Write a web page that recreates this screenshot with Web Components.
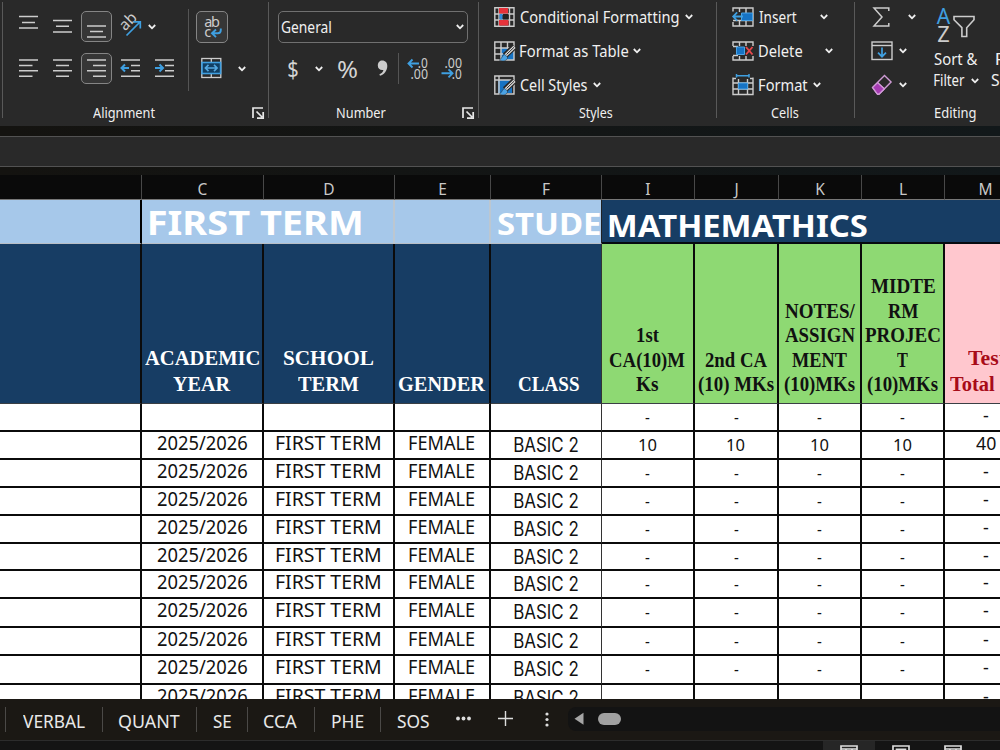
<!DOCTYPE html>
<html lang="en">
<head>
<meta charset="utf-8">
<title>Score sheet</title>
<style>
  body {
    margin: 0;
    width: 1000px;
    height: 750px;
    overflow: hidden;
    background: #141414;
    font-family: "Noto Sans", "Open Sans", sans-serif;
  }
</style>
</head>
<body>
<score-app></score-app>

<script>
// name: [width, height, markup]
const ICONS = {
  chevron: [8, 6, '<path d="M.8 1 4 4.3 7.2 1" stroke="#eee" stroke-width="1.8"/>'],
  top: [20, 31, '<path d="M0 5.5h19M3 11.5h13M0 17h19"/>'],
  middle: [20, 31, '<path d="M0 9.5h19M3 15.3h13M0 21h19"/>'],
  bottom: [20, 31, '<path d="M0 15h19M3 20.5h13M0 26h19"/>'],
  left: [20, 31, '<path d="M0 7h19M0 12.4h13.5M0 17.8h19M0 23.2h13.5"/>'],
  center: [20, 31, '<path d="M0 7h19M3 12.4h13M0 17.8h19M3 23.2h13"/>'],
  right: [20, 31, '<path d="M0 7h19M6 12.4h13M0 17.8h19M6 23.2h13"/>'],
  outdent: [20, 31, '<path d="M1 7h19M11 12.4h9M11 17.8h9M1 23.2h19"/><path d="M9 15H2M5 11.5 1.5 15 5 18.5" stroke="#3f9fe0" stroke-width="2"/>'],
  indent: [20, 31, '<path d="M0 7h19M10 12.4h9M10 17.8h9M0 23.2h19"/><path d="M0 15h7M4.500 11.5 8 15l-3.500 3.500" stroke="#3f9fe0" stroke-width="2"/>'],
  orient: [24, 31, '<text x="0" y="0" transform="translate(6 20.500) rotate(-45)" font-size="15.500" fill="#ccc">ab</text><path d="M7.500 24.500 21 11M14.500 10.800H21.300V17.500" stroke="#3f9fe0" stroke-width="1.700"/>'],
  wrap: [32, 32, '<text x="8.300" y="16" font-size="14.500" textLength="15.500" fill="#ccc">ab</text><text x="8.300" y="25.500" font-size="14.500" fill="#ccc">c</text><path d="M24.800 17.500v1.500q0 3.300-3 3.300h-5.500M20 18.500l-4 3.800 4 3.800" stroke="#3f9fe0" stroke-width="1.900"/>'],
  merge: [21, 31, '<rect x=".8" y="5.500" width="19" height="19" stroke="#ccc" stroke-width="1.300"/><path d="M10.300 5v4M10.300 21v4" stroke-width="1.300"/><rect x="1" y="9.500" width="18.600" height="11" fill="#123f63" stroke="#3f9fe0" stroke-width="1.600"/><path d="M4.500 15h11.500M7.500 11.900 4.400 15l3.100 3.100M13 11.900l3.100 3.100-3.100 3.100" stroke="#54a9e2" stroke-width="1.600"/>'],
  decMore: [22, 31, '<text x="10.800" y="14.500" font-size="14" textLength="10" lengthAdjust="spacingAndGlyphs" fill="#ccc">.0</text><text x="3.500" y="25.500" font-size="14" textLength="17.500" lengthAdjust="spacingAndGlyphs" fill="#ccc">.00</text><path d="M12 10.500H1.500M5.500 6.500l-4 4 4 4" stroke="#3f9fe0" stroke-width="1.900"/>'],
  decLess: [22, 31, '<text x="3.500" y="14.500" font-size="14" textLength="17.500" lengthAdjust="spacingAndGlyphs" fill="#ccc">.00</text><text x="10.800" y="25.500" font-size="14" textLength="10" lengthAdjust="spacingAndGlyphs" fill="#ccc">.0</text><path d="M.5 20.300h10.500M7.500 16.300l4 4-4 4" stroke="#3f9fe0" stroke-width="1.900"/>'],
  comma: [12, 31, '<path d="M5.200 7.500c3.300 0 5.100 2.300 5.100 5.500 0 4.600-3.200 8.600-7.300 9.800l-.6-1.600c2.400-1 3.700-2.600 4-4.300-3.100.6-5.600-1.300-5.600-4.500 0-2.800 1.900-4.900 4.400-4.900Z" fill="#ccc" stroke="none"/>'],
  launcher: [12, 12, '<path d="M1 11V1h10M4.500 4.500l5.500 5.500M11.200 5v6.200H5" stroke="#e8e8e8" stroke-width="1.700"/>'],
  conditional: [21, 20, '<path d="M.8.8h19.200v18.400H.8zM1 7h19M1 13h19M5 1v18M15.500 1v18" stroke-width="1.400"/><path d="M5 1h9v5.500H5zM5 13h9.500v5.500H5z" fill="#e5323a" stroke="none"/><path d="M5.500 7h3v5.500h-3z" fill="#2d8bdc" stroke="none"/><path d="M9 7h5.500v5.500H9z" fill="#222" stroke="none"/>'],
  table: [22, 21, '<path d="M7 7h13v12H7z" fill="#1673c4" stroke="none"/><path d="M.8 1h19.200v18H.8zM1 7h19M1 13h8M7 1v18M13.500 1v7" stroke-width="1.400"/><path d="M20.500 5.500 11 14.500" stroke="#292929" stroke-width="6"/><path d="M20.500 5.800 11.500 14.500" stroke="#ddd" stroke-width="3"/><path d="m20 6.300-7.500 7.200" stroke="#292929" stroke-width="1"/><path d="M10.800 13.500c-2.800.2-2.200 4-5.500 5.600 4 2 8.200.6 8.300-3Z" fill="#4ba3e5" stroke="#292929" stroke-width=".5"/>'],
  style: [22, 21, '<path d="M4 5h14v13H4z" fill="#1673c4" stroke="none"/><path d="M.8 1h19.200v18H.8zM1 5h19M5 1v18" stroke-width="1.400"/><path d="M20.500 5.500 11 14.500" stroke="#292929" stroke-width="6"/><path d="M20.500 5.800 11.500 14.500" stroke="#ddd" stroke-width="3"/><path d="m20 6.300-7.500 7.200" stroke="#292929" stroke-width="1"/><path d="M10.800 13.500c-2.800.2-2.200 4-5.500 5.600 4 2 8.200.6 8.300-3Z" fill="#4ba3e5" stroke="#292929" stroke-width=".5"/>'],
  insert: [22, 20, '<path d="M1 4.500V1h20v18H1v-4M1 13.500h20M7.500 1v4M14 1v18M7.500 14v5" stroke-width="1.400"/><path d="M9.500 6h11v7.500h-11z" fill="#1673c4" stroke="#4ba3e5" stroke-width="1"/><path d="M11 9.500H1.500M5.200 5.300 1.200 9.500l4 4.200" stroke="#3f9fe0" stroke-width="1.800"/>'],
  delete: [22, 20, '<path d="M1 5V1h20v4M1 15v4h20v-4M7.500 1v4M14 1v4M7.500 15v4M14 15v4M1 5.500h5M1 14.500h5" stroke-width="1.400"/><path d="M4.500 6h8v7.500h-8z" fill="#1673c4" stroke="#4ba3e5" stroke-width="1"/><path d="m14 6 6.500 7.500M20.500 6 14 13.500" stroke="#e8484c" stroke-width="1.900"/>'],
  format: [22, 22, '<path d="M1 3.500v17h20v-17M1 9h20M1 15h20M6.500 5v15M15.500 5v15M1 4.500h3M18 4.500h3" stroke-width="1.400"/><path d="M6.500 9h9v6h-9z" fill="#1673c4" stroke="#4ba3e5" stroke-width="1"/><path d="M4.500 1.800h12.500M4.500 0v3.600M17 0v3.600" stroke="#3f9fe0" stroke-width="1.500"/>'],
  sum: [17, 20, '<path d="M15.800 4V1H1l8 9-8 9h14.800v-3" stroke-width="1.500"/>'],
  fill: [22, 20, '<rect x="1" y="1" width="20" height="17.500" stroke-width="1.400"/><path d="M1 4.500h20" stroke-width="1.400"/><path d="M11 6.500v9M7 11.700l4 4 4-4" stroke="#3f9fe0" stroke-width="1.700"/>'],
  clear: [22, 22, '<path d="m1.500 13.500 5-5 7.300 6.500-5.300 5H6z" fill="#a63bb3" stroke="#c77ad0" stroke-width="1"/><path d="m1.500 13.500 12-12 6.600 6.500L8 20.300H6.500zM6.500 8.500l7 6.500" stroke="#cf9bd5" stroke-width="1.400"/>'],
  sort: [40, 37, '<text x="-.3" y="16.800" font-size="22" textLength="13.500" lengthAdjust="spacingAndGlyphs" fill="#3f9fe0">A</text><text x=".2" y="35" font-size="21.500" textLength="12.500" lengthAdjust="spacingAndGlyphs" fill="#ccc">Z</text><path d="M17 9.500h20v3.200l-7.300 8v8.800h-4.800v-8.800l-7.900-8z" stroke-width="1.600"/>'],
  dots: [15, 5, '<g fill="#ddd" stroke="none"><circle cx="2" cy="2.500" r="1.900"/><circle cx="7.500" cy="2.500" r="1.900"/><circle cx="13" cy="2.500" r="1.900"/></g>'],
  plus: [15, 15, '<path d="M7.500 0v15M0 7.500h15" stroke="#ddd" stroke-width="1.400"/>'],
  more: [4, 15, '<g fill="#ddd" stroke="none"><circle cx="2" cy="2" r="1.600"/><circle cx="2" cy="7.500" r="1.600"/><circle cx="2" cy="13" r="1.600"/></g>'],
  back: [10, 14, '<path d="M9.500.8v12L.5 6.800z" fill="#a5a5a5" stroke="none"/>'],
  grid: [18, 9, '<path d="M1 9V1h16v8M1 4h16M6 4v5M12 4v5" stroke="#ddd" stroke-width="1.700"/>'],
  page: [18, 9, '<path d="M1 9V1h16v8M4.500 9V4.300h9V9" stroke="#ddd" stroke-width="1.700"/>']
};

class XIcon extends HTMLElement {
  constructor() {
    super();
    this.attachShadow({ mode: 'open' });
  }

  connectedCallback() {
    const [w, h, markup] = ICONS[this.getAttribute('name')];
    this.shadowRoot.innerHTML = `
      <style>
        :host { display: block; flex: none; width: ${w}px; height: ${h}px; }
        svg { display: block; overflow: visible; font-family: "Noto Sans", sans-serif; }
      </style>
      <svg width="${w}" height="${h}" fill="none" stroke="#ccc" stroke-width="1.5">${markup}</svg>
    `;
    this.shadowRoot.querySelectorAll('text').forEach(t => t.setAttribute('stroke', 'none'));
  }
}

// One line of text, stretched so that its ink is exactly `w` pixels wide
class FitText extends HTMLElement {
  constructor() {
    super();
    this.attachShadow({ mode: 'open' });
    this.shadowRoot.innerHTML = `
      <style>
        :host { display: block; flex: none; white-space: nowrap; }
        span { display: inline-block; transform-origin: 0 50%; }
      </style>
      <span><slot></slot></span>
    `;
  }

  connectedCallback() {
    const w = Number(this.getAttribute('w'));
    const css = getComputedStyle(this);
    const ctx = document.createElement('canvas').getContext('2d');
    ctx.font = `${css.fontWeight} ${css.fontSize} ${css.fontFamily}`;
    const m = ctx.measureText(this.textContent);
    const scale = w / (m.actualBoundingBoxLeft + m.actualBoundingBoxRight);
    const shift = m.actualBoundingBoxLeft * scale;
    this.style.width = w + 'px';
    this.shadowRoot.querySelector('span').style.transform =
      `translateX(${shift.toFixed(2)}px) scaleX(${scale.toFixed(4)})`;
  }
}

class RibbonGroup extends HTMLElement {
  constructor() {
    super();
    this.attachShadow({ mode: 'open' });
  }

  connectedCallback() {
    const launcher = this.hasAttribute('launcher') ? '<x-icon name="launcher"></x-icon>' : '';
    this.shadowRoot.innerHTML = `
      <style>
        :host {
          display: block;
          flex: none;
          box-sizing: border-box;
          height: 118px;
          background: linear-gradient(#595959, #595959) right 2px / 1px 116px no-repeat;
        }
        .body { height: 102px; }
        footer {
          display: flex;
          height: 22px;
          font-size: 14px;
          line-height: 22px;
          padding-left: ${this.getAttribute('label-left')}px;
        }
        x-icon { margin: 5px 5px 0 auto; }
      </style>
      <div class="body"><slot></slot></div>
      <footer><fit-text w="${this.getAttribute('label-width')}">${this.getAttribute('label')}</fit-text>${launcher}</footer>
    `;
  }
}

class ExcelRibbon extends HTMLElement {
  constructor() {
    super();
    this.attachShadow({ mode: 'open' });
    this.shadowRoot.innerHTML = `
      <style>
        :host {
          display: flex;
          height: 126px;
          box-sizing: border-box;
          padding-left: 3px;
          overflow: hidden;
          color: #f0f0f0;
          font-size: 15.5px;
          background: linear-gradient(#595959, #595959) 2px 2px / 1px 116px no-repeat #292929;
        }
        .cols, .row, .line { display: flex; }
        .rows { display: flex; flex-direction: column; gap: 11px; padding-top: 11px; }
        .row { height: 31px; align-items: center; }
        .line { height: 34px; align-items: center; }
        .on {
          width: 29px;
          height: 29px;
          border: 1px solid #858585;
          border-radius: 5px;
          background: #363636;
          flex: none;
        }
        .on x-icon { margin: -1px 0 0 5px; }
        .on.wide { width: 30px; height: 30px; }
        .on.wide x-icon { margin: -1px; }
        .sep { width: 1px; background: #555; flex: none; }
        .select {
          box-sizing: border-box;
          width: 190px;
          height: 32px;
          border: 1px solid #707070;
          border-radius: 5px;
          display: flex;
          align-items: center;
          justify-content: space-between;
          padding: 0 3px 0 2px;
        }
        .symbol { color: #d4d4d4; font-size: 24px; line-height: 30px; font-weight: 400; }
        .edit { width: 63px; }
        .big { padding-top: 7px; line-height: 21px; }
        .big .row { height: 21px; }
      </style>

      <ribbon-group label="Alignment" label-left="90" label-width="62" launcher style="width: 266px">
        <div class="cols">
          <div class="rows" style="width: 185px">
            <div class="row">
              <x-icon name="top" style="margin-left: 16px"></x-icon>
              <x-icon name="middle" style="margin-left: 14px"></x-icon>
              <div class="on" style="margin-left: 8px"><x-icon name="bottom"></x-icon></div>
              <x-icon name="orient" style="margin-left: 7px"></x-icon>
              <x-icon name="chevron" style="margin-left: 5px"></x-icon>
            </div>
            <div class="row">
              <x-icon name="left" style="margin-left: 16px"></x-icon>
              <x-icon name="center" style="margin-left: 14px"></x-icon>
              <div class="on" style="margin-left: 8px"><x-icon name="right"></x-icon></div>
              <x-icon name="outdent" style="margin-left: 8px"></x-icon>
              <x-icon name="indent" style="margin-left: 15px"></x-icon>
            </div>
          </div>
          <div class="sep" style="margin-top: 9px; height: 82px"></div>
          <div class="rows">
            <div class="row"><div class="on wide" style="margin-left: 7px"><x-icon name="wrap"></x-icon></div></div>
            <div class="row">
              <x-icon name="merge" style="margin-left: 12px"></x-icon>
              <x-icon name="chevron" style="margin-left: 16px"></x-icon>
            </div>
          </div>
        </div>
      </ribbon-group>

      <ribbon-group label="Number" label-left="68" label-width="49" launcher style="width: 210px">
        <div class="rows" style="padding-left: 9px">
          <div class="row"><div class="select"><fit-text w="50">General</fit-text><x-icon name="chevron"></x-icon></div></div>
          <div class="row">
            <fit-text w="10" class="symbol" style="margin-left: 10px">$</fit-text>
            <x-icon name="chevron" style="margin-left: 17px"></x-icon>
            <fit-text w="19" class="symbol" style="margin-left: 15px">%</fit-text>
            <x-icon name="comma" style="margin-left: 20px"></x-icon>
            <div class="sep" style="margin-left: 9px; height: 31px"></div>
            <x-icon name="decMore" style="margin-left: 8px"></x-icon>
            <x-icon name="decLess" style="margin-left: 12px"></x-icon>
          </div>
        </div>
      </ribbon-group>

      <ribbon-group label="Styles" label-left="100" label-width="34" style="width: 238px">
        <div style="padding-left: 15px">
          <div class="line"><x-icon name="conditional"></x-icon><fit-text w="159" style="margin-left: 5px">Conditional Formatting</fit-text><x-icon name="chevron" style="margin-left: 6px"></x-icon></div>
          <div class="line"><x-icon name="table"></x-icon><fit-text w="108" style="margin-left: 4px">Format as Table</fit-text><x-icon name="chevron" style="margin-left: 5px"></x-icon></div>
          <div class="line"><x-icon name="style"></x-icon><fit-text w="67" style="margin-left: 4px">Cell Styles</fit-text><x-icon name="chevron" style="margin-left: 6px"></x-icon></div>
        </div>
      </ribbon-group>

      <ribbon-group label="Cells" label-left="54" label-width="28" style="width: 138px">
        <div style="padding-left: 15px">
          <div class="line"><x-icon name="insert"></x-icon><fit-text w="38" style="margin-left: 5px">Insert</fit-text><x-icon name="chevron" style="margin-left: 23px"></x-icon></div>
          <div class="line"><x-icon name="delete"></x-icon><fit-text w="43" style="margin-left: 5px">Delete</fit-text><x-icon name="chevron" style="margin-left: 23px"></x-icon></div>
          <div class="line"><x-icon name="format"></x-icon><fit-text w="49" style="margin-left: 5px">Format</fit-text><x-icon name="chevron" style="margin-left: 5px"></x-icon></div>
        </div>
      </ribbon-group>

      <ribbon-group label="Editing" label-left="80" label-width="41" style="width: 240px">
        <div class="cols">
          <div style="padding-left: 16px" class="edit">
            <div class="line"><x-icon name="sum" style="margin-left: 2px"></x-icon><x-icon name="chevron" style="margin-left: 18px"></x-icon></div>
            <div class="line"><x-icon name="fill"></x-icon><x-icon name="chevron" style="margin-left: 6px"></x-icon></div>
            <div class="line"><x-icon name="clear"></x-icon><x-icon name="chevron" style="margin-left: 6px"></x-icon></div>
          </div>
          <div class="big" style="margin-left: 4px; width: 53px">
            <x-icon name="sort" style="margin: 0 0 5px -1px"></x-icon>
            <div class="row"><fit-text w="44" style="margin-left: -4px">Sort &amp;</fit-text></div>
            <div class="row"><fit-text w="31" style="margin-left: -4px">Filter</fit-text><x-icon name="chevron" style="margin-left: 6px"></x-icon></div>
          </div>
          <div class="big" style="padding-top: 49px">
            <div class="row"><fit-text w="34" style="margin-left: 5px">Find</fit-text></div>
            <div class="row"><fit-text w="44">Select</fit-text></div>
          </div>
        </div>
      </ribbon-group>
    `;
  }
}

class FormulaBar extends HTMLElement {
  constructor() {
    super();
    this.attachShadow({ mode: 'open' });
    this.shadowRoot.innerHTML = `
      <style>
        :host {
          display: block;
          height: 49px;
          box-sizing: border-box;
          padding: 10px 0 8px;
          background: linear-gradient(90deg, #141310, #12181a);
        }
        div { height: 29px; border: solid #525252; border-width: 1px 0; background: #292929; }
      </style>
      <div></div>
    `;
  }
}

const HEADINGS = [
  null,
  [['ACADEMIC', 114.5], ['YEAR', 58]],
  [['SCHOOL', 89], ['TERM', 60.5]],
  [['GENDER', 87]],
  [['CLASS', 60]],
  [['1st', 22], ['CA(10)M', 74.5], ['Ks', 22.5]],
  [['2nd CA', 62], ['(10) MKs', 76]],
  [['NOTES/', 70], ['ASSIGN', 70], ['MENT', 55], ['(10)MKs', 71]],
  [['MIDTE', 64], ['RM', 30], ['PROJEC', 75], ['T', 11], ['(10)MKs', 71]],
  [['Test', 38], ['Total', 45]]
];
const ROW_HEIGHTS = [28, 28, 28, 28, 28, 27, 28, 29, 28, 29, 28];

class ScoreGrid extends HTMLElement {
  constructor() {
    super();
    this.attachShadow({ mode: 'open' });
    this.shadowRoot.innerHTML = `
      <style>
        :host { display: block; height: 524px; overflow: hidden; background: #fff; }
        .row {
          display: grid;
          grid-template-columns: 142px 122px 131px 96px 111px 93px 84px 83px 83px 82px;
        }
        .row > div {
          box-sizing: border-box;
          border-right: 2px solid #0b0b0b;
          border-bottom: 2px solid #0b0b0b;
          display: flex;
          justify-content: center;
          overflow: hidden;
        }
        .letters { height: 25px; line-height: 28px; color: #c8c8c8; font-size: 15.5px; }
        .letters > div { background: #0a0a0a; border-right: 1px solid #484848; border-bottom: 1px solid #777; }
        .titles {
          height: 44px;
          grid-template-columns: 142px 253px 96px 111px 480px;
          color: #fff;
          font-weight: 700;
        }
        .titles > div {
          background: #a6c8ea;
          border-right-color: #bcc7d1;
          border-bottom: 1px solid #b9bfc6;
          justify-content: flex-start;
        }
        .titles > :first-child { border-right-color: #000; }
        .titles > :nth-child(4) { border-right: 1px solid #222; }
        .titles > :last-child { background: #173d64; border-bottom: 2px solid #060b10; }
        .heads {
          height: 160px;
          font: 700 20.7px/26px "Liberation Serif", serif;
          color: #fff;
        }
        .heads > div {
          flex-direction: column;
          align-items: center;
          justify-content: flex-end;
          background: #173d64;
          border-bottom: 1px solid #3a3f44;
          padding-bottom: 6px;
        }
        .heads > .green { background: #8ed973; color: #111; line-height: 24.4px; padding-bottom: 6.5px; }
        .heads > .pink { background: #ffc7ce; color: #a80b18; }
        .heads > :nth-child(5), .data > :nth-child(5) { border-right: 1px solid #333; }
        .data { color: #111; font-size: 19px; line-height: 23px; }
        .class { font: 19.4px/26px Inter, Roboto, sans-serif; }
        .mark { font-size: 16.5px; line-height: 26px; }
        .total { font-size: 18px; line-height: 22px; margin-left: 2px; }
      </style>
      <div class="row letters"></div>
      <div class="row titles">
        <div></div>
        <div><fit-text w="211" style="font-size: 34.5px; line-height: 44px; margin-left: 8px">FIRST TERM</fit-text></div>
        <div></div>
        <div><fit-text w="102" style="font-size: 31px; line-height: 47px; margin-left: 7px">STUDE</fit-text></div>
        <div><fit-text w="258" style="font-size: 30.5px; line-height: 50px; margin-left: 7px">MATHEMATHICS</fit-text></div>
      </div>
      <div class="row heads"></div>
    `;
    this._renderHeader();
    this._renderRows();
  }

  _renderHeader() {
    const letters = ['', 'C', 'D', 'E', 'F', 'I', 'J', 'K', 'L', 'M'];
    this.shadowRoot.querySelector('.letters').innerHTML =
      letters.map(letter => `<div>${letter}</div>`).join('');
    this.shadowRoot.querySelector('.heads').innerHTML = HEADINGS.map((lines, i) => {
      const type = i === 9 ? 'pink' : i > 4 ? 'green' : '';
      const text = (lines || []).map(([t, w]) => `<fit-text w="${w}">${t}</fit-text>`).join('');
      const nudge = i === 4 ? ' style="padding-left: 5px"' : i === 9 ? ' style="align-items: flex-start; padding-left: 5px"' : '';
      return `<div class="${type}"${nudge}>${text}</div>`;
    }).join('');
    this.shadowRoot.querySelector('.pink fit-text').style.marginLeft = '18px';
  }

  _renderRows() {
    ROW_HEIGHTS.forEach((height, i) => {
      const row = document.createElement('div');
      row.className = 'row data';
      row.style.height = height + 'px';
      const pupil = i > 0
        ? `<div><fit-text w="90">2025/2026</fit-text></div>
           <div><fit-text w="104.500">FIRST TERM</fit-text></div>
           <div><fit-text w="65.500">FEMALE</fit-text></div>
           <div><fit-text class="class" w="64">BASIC 2</fit-text></div>`
        : '<div></div><div></div><div></div><div></div>';
      const mark = i === 1 ? '<fit-text class="mark" w="17.500">10</fit-text>' : '<fit-text class="mark" w="4.500">-</fit-text>';
      const total = i === 1 ? '<fit-text class="total" w="20">40</fit-text>' : '<fit-text class="total" w="6">-</fit-text>';
      // the last row is cut by the tab bar above the line of its marks
      const marks = i < ROW_HEIGHTS.length - 1 ? `<div>${mark}</div>`.repeat(4) : '<div></div>'.repeat(4);
      row.innerHTML = '<div></div>' + pupil + marks + `<div>${total}</div>`;
      this.shadowRoot.appendChild(row);
    });
  }
}

class SheetTabs extends HTMLElement {
  constructor() {
    super();
    this.attachShadow({ mode: 'open' });
    this.shadowRoot.innerHTML = `
      <style>
        :host {
          display: flex;
          align-items: center;
          box-sizing: border-box;
          height: 42px;
          padding: 0 0 1px 5px;
          background: #1b1814;
          border-bottom: 1px solid #2c2c2c;
          color: #e8e8e8;
          font-size: 17.5px;
          line-height: 40px;
        }
        .tab {
          display: flex;
          justify-content: center;
          box-sizing: border-box;
          height: 25px;
          line-height: 28px;
          border-left: 1px solid #4b4947;
        }
        .scroll {
          display: flex;
          align-items: center;
          flex: 1;
          height: 24px;
          margin: 0 0 0 19px;
          padding-left: 6px;
          border-radius: 8px 0 0 8px;
          background: #131313;
        }
        .thumb { width: 23px; height: 12px; margin-left: 14px; border-radius: 6px; background: #a0a0a0; }
      </style>
      <div class="tab" style="width: 97px"><fit-text w="62">VERBAL</fit-text></div>
      <div class="tab" style="width: 94px"><fit-text w="61">QUANT</fit-text></div>
      <div class="tab" style="width: 51px"><fit-text w="18">SE</fit-text></div>
      <div class="tab" style="width: 67px"><fit-text w="33.500">CCA</fit-text></div>
      <div class="tab" style="width: 66px"><fit-text w="31.500">PHE</fit-text></div>
      <div class="tab" style="width: 65px"><fit-text w="32">SOS</fit-text></div>
      <x-icon name="dots" style="margin: -2px 0 0 11px"></x-icon>
      <x-icon name="plus" style="margin: -2px 0 0 27px"></x-icon>
      <x-icon name="more" style="margin-left: 32px"></x-icon>
      <div class="scroll"><x-icon name="back"></x-icon><div class="thumb"></div></div>
    `;
  }
}

class StatusBar extends HTMLElement {
  constructor() {
    super();
    this.attachShadow({ mode: 'open' });
    this.shadowRoot.innerHTML = `
      <style>
        :host { display: flex; justify-content: flex-end; height: 9px; overflow: hidden; background: #141414; }
        div { width: 52px; display: flex; justify-content: center; padding-top: 4px; }
        .active { background: #262626; }
      </style>
      <div class="active"><x-icon name="grid"></x-icon></div>
      <div><x-icon name="page"></x-icon></div>
      <div style="margin-right: 21px"><x-icon name="grid"></x-icon></div>
    `;
  }
}

class ScoreApp extends HTMLElement {
  constructor() {
    super();
    this.attachShadow({ mode: 'open' });
    this.shadowRoot.innerHTML = `
      <style>
        :host { display: flex; flex-direction: column; width: 1000px; height: 750px; overflow: hidden; }
        :host > * { flex: none; }
      </style>
      <excel-ribbon></excel-ribbon>
      <formula-bar></formula-bar>
      <score-grid></score-grid>
      <sheet-tabs></sheet-tabs>
      <status-bar></status-bar>
    `;
  }
}

customElements.define('x-icon', XIcon);
customElements.define('fit-text', FitText);
customElements.define('ribbon-group', RibbonGroup);
customElements.define('excel-ribbon', ExcelRibbon);
customElements.define('formula-bar', FormulaBar);
customElements.define('score-grid', ScoreGrid);
customElements.define('sheet-tabs', SheetTabs);
customElements.define('status-bar', StatusBar);
customElements.define('score-app', ScoreApp);
</script>
</body>
</html>
